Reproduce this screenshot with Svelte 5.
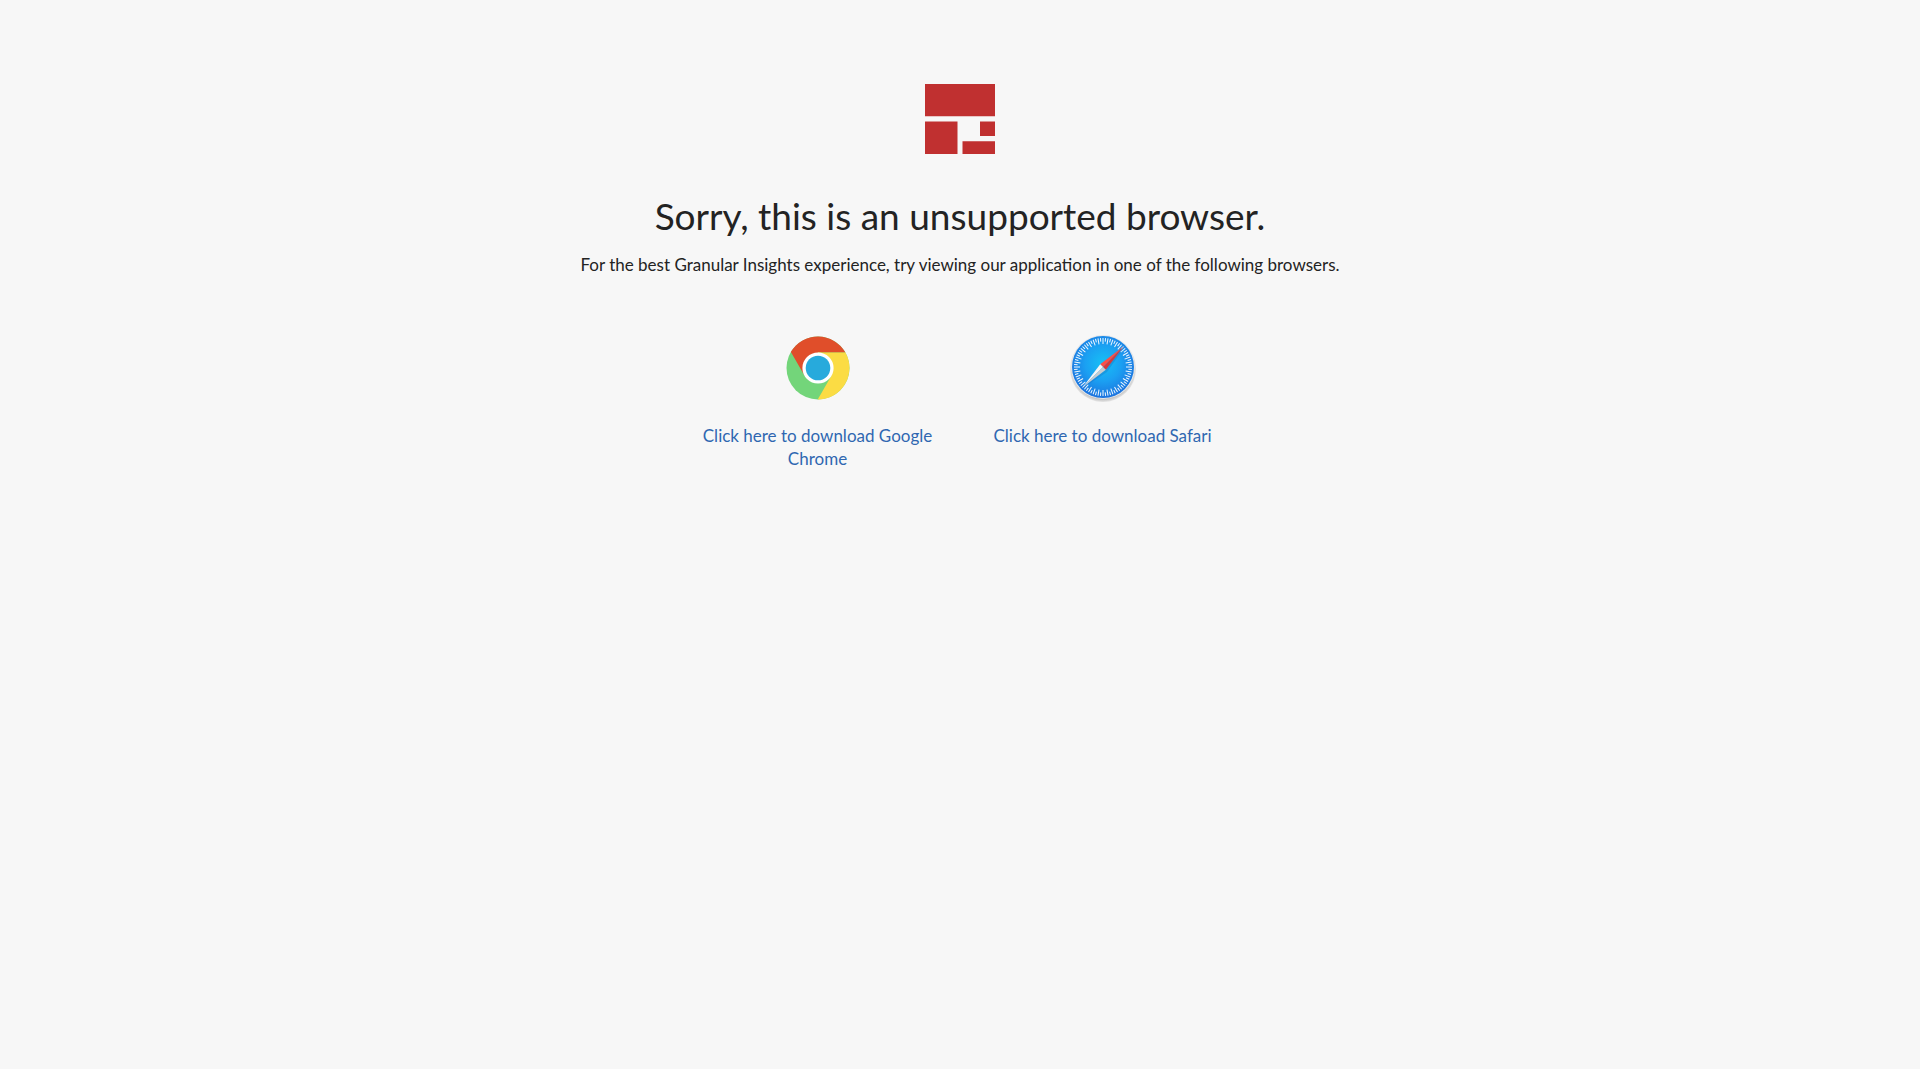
<script lang="ts">
	type Browser = { id: 'chrome' | 'safari'; label: string; href: string };

	const browsers: Browser[] = [
		{ id: 'chrome', label: 'Click here to download Google Chrome', href: 'https://www.google.com/chrome/' },
		{ id: 'safari', label: 'Click here to download Safari', href: 'https://support.apple.com/downloads/safari' }
	];

	const ticks = Array.from({ length: 72 }, (_, i) => ({ angle: i * 5, inner: i % 2 ? 5.5 : 8 }));
</script>

<svelte:head><title>Unsupported browser</title></svelte:head>

<main>
	<svg class="logo" viewBox="0 0 70 70" aria-hidden="true">
		<path fill="#c03030" d="M0 0h70v32.3H0zM0 37.5h32.5V70H0zM55 37.5h15V52H55zM37.5 57.3H70V70H37.5z" />
	</svg>
	<h1>Sorry, this is an unsupported browser.</h1>
	<p>For the best Granular Insights experience, try viewing our application in one of the following browsers.</p>

	<div class="browsers">
		{#each browsers as b (b.id)}
			<a href={b.href}>
				{#if b.id === 'chrome'}
					<svg class="icon" viewBox="0 0 64 64" aria-hidden="true">
						<circle cx="32" cy="32" r="31.5" fill="#73d57a" />
						<path fill="#e04e2a" d="M4.9 16A31.5 31.5 0 0 1 59.4 16.5H32V32L18.6 39.7z" />
						<path fill="#fbdc44" d="M59.4 16.5A31.5 31.5 0 0 1 31.7 63.5L45.4 39.7 32 32V16.5z" />
						<circle cx="32" cy="32" r="15.6" fill="#fff" />
						<circle cx="32" cy="32" r="12.3" fill="#27aadc" />
					</svg>
				{:else}
					<svg class="icon" viewBox="0 0 64 64" aria-hidden="true">
						<defs>
							<radialGradient id="dial" cx="32" cy="27" r="36" gradientUnits="userSpaceOnUse">
								<stop offset="0" stop-color="#16c0f5" />
								<stop offset="0.5" stop-color="#1ba0f2" />
								<stop offset="1" stop-color="#1c70dd" />
							</radialGradient>
							<radialGradient id="shade" cx="32" cy="33" r="33" gradientUnits="userSpaceOnUse">
								<stop offset="0.9" stop-color="#aaa" stop-opacity="0.8" />
								<stop offset="1" stop-color="#bbb" stop-opacity="0.3" />
							</radialGradient>
						</defs>
						<circle cx="32" cy="33" r="33" fill="url(#shade)" />
						<circle cx="32" cy="31" r="32" fill="#e6e8ea" />
						<circle cx="32" cy="31" r="31" fill="url(#dial)" />
						<g stroke="#f0f8ff" stroke-width="1">
							{#each ticks as t}
								<path d="M32 2V{t.inner}" transform="rotate({t.angle} 32 31)" />
							{/each}
						</g>
						<path fill="#1566b8" fill-opacity="0.3" d="M53 12L36 36 12 52z" />
						<path fill="#fb4f48" d="M52.5 10.5L29.2 28.2l2.8 2.8z" />
						<path fill="#d33a3c" d="M52.5 10.5L32 31l2.8 2.8z" />
						<path fill="#f4f5f6" d="M11.5 51.5l17.7-23.3 2.8 2.8z" />
						<path fill="#c5cbd0" d="M11.5 51.5L32 31l2.8 2.8z" />
					</svg>
				{/if}
				<span>{b.label}</span>
			</a>
		{/each}
	</div>
</main>

<style>
	:global(body) {
		margin: 0;
		background: #fff;
	}
	main {
		box-sizing: border-box;
		min-height: calc(100vh - 11px);
		padding: 84px 16px 32px;
		display: flex;
		flex-direction: column;
		align-items: center;
		background: #f7f7f7;
		color: #232323;
		font-family: 'Avenir Next', Avenir, Lato, sans-serif;
		font-size: 17px;
		line-height: 23px;
		text-align: center;
	}
	.logo {
		width: 70px;
		height: 70px;
	}
	h1 {
		margin: 38px 0 0;
		font-size: 37px;
		font-weight: 400;
		line-height: 48px;
	}
	p {
		margin: 13px 0 0;
	}
	.browsers {
		display: flex;
		flex-wrap: wrap;
		justify-content: center;
		gap: 50px;
		margin-top: 60px;
	}
	a {
		width: 235px;
		color: #2f67b1;
		text-decoration: none;
	}
	a:hover {
		text-decoration: underline;
	}
	.icon {
		display: block;
		width: 64px;
		height: 64px;
		margin: 0 auto 24px;
		overflow: visible;
	}
</style>
